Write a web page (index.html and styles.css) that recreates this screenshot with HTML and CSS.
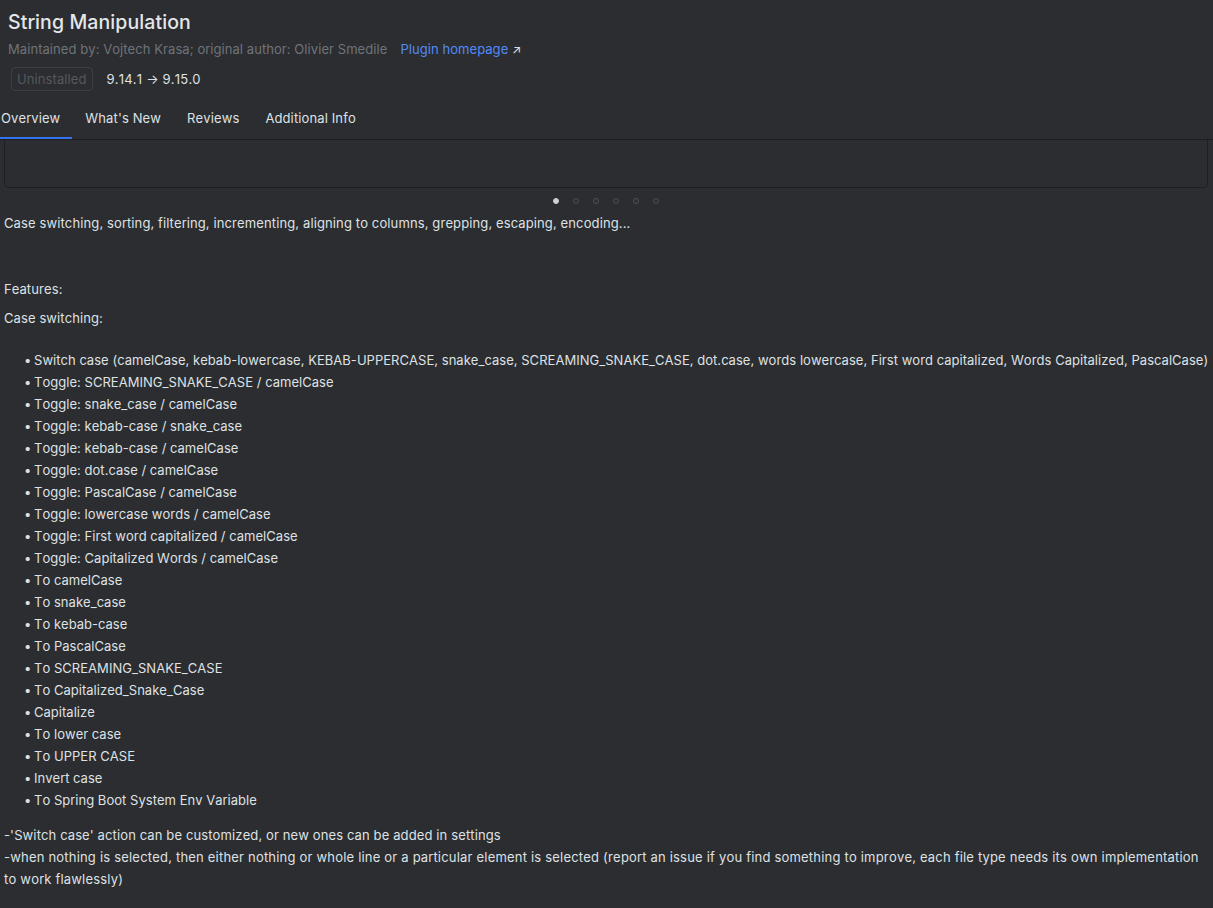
FILE: index.html
```html
<!DOCTYPE html>
<html>
<head>
<meta charset="utf-8">
<link rel="stylesheet" href="styles.css">
</head>
<body>
<div class="page">
  <header class="head">
    <h1 class="title">String Manipulation</h1>
    <div class="meta">
      <span class="authors">Maintained by: Vojtech Krasa; original author: Olivier Smedile</span>
      <a class="homepage">Plugin homepage <span class="arrow">↗</span></a>
    </div>
    <div class="status">
      <span class="badge">Uninstalled</span>
      <span class="version">9.14.1 → 9.15.0</span>
    </div>
  </header>
  <nav class="tabs">
    <span class="tab active">Overview</span>
    <span class="tab">What's New</span>
    <span class="tab">Reviews</span>
    <span class="tab">Additional Info</span>
  </nav>
  <main class="content">
    <div class="shot"></div>
    <div class="dots">
      <span class="dot on"></span><span class="dot"></span><span class="dot"></span><span class="dot"></span><span class="dot"></span><span class="dot"></span>
    </div>
    <p class="lead">Case switching, sorting, filtering, incrementing, aligning to columns, grepping, escaping, encoding...</p>
    <p class="features">Features:</p>
    <p class="sub">Case switching:</p>
    <ul class="list">
      <li>Switch case (camelCase, kebab-lowercase, KEBAB-UPPERCASE, snake_case, SCREAMING_SNAKE_CASE, dot.case, words lowercase, First word capitalized, Words Capitalized, PascalCase)</li>
      <li>Toggle: SCREAMING_SNAKE_CASE / camelCase</li>
      <li>Toggle: snake_case / camelCase</li>
      <li>Toggle: kebab-case / snake_case</li>
      <li>Toggle: kebab-case / camelCase</li>
      <li>Toggle: dot.case / camelCase</li>
      <li>Toggle: PascalCase / camelCase</li>
      <li>Toggle: lowercase words / camelCase</li>
      <li>Toggle: First word capitalized / camelCase</li>
      <li>Toggle: Capitalized Words / camelCase</li>
      <li>To camelCase</li>
      <li>To snake_case</li>
      <li>To kebab-case</li>
      <li>To PascalCase</li>
      <li>To SCREAMING_SNAKE_CASE</li>
      <li>To Capitalized_Snake_Case</li>
      <li>Capitalize</li>
      <li>To lower case</li>
      <li>To UPPER CASE</li>
      <li>Invert case</li>
      <li>To Spring Boot System Env Variable</li>
    </ul>
    <p class="note"><span class="note-a">-'Switch case' action can be customized, or new ones can be added in settings</span><br>-when nothing is selected, then either nothing or whole line or a particular element is selected (report an issue if you find something to improve, each file type needs its own implementation to work flawlessly)</p>
  </main>
</div>
</body>
</html>
```
FILE: styles.css
```css
html, body {
  margin: 0;
  padding: 0;
  background: #2b2d30;
  height: 100%;
  overflow: hidden;
}
body {
  font-family: Inter, "Noto Sans", sans-serif;
  font-size: 13px;
  font-kerning: none;
  color: #dfe1e5;
}
.page {
  display: flex;
  flex-direction: column;
}
.head {
  padding: 9px 8px 0 8px;
}
.title {
  margin: 0;
  font-size: 19.5px;
  font-weight: 500;
  letter-spacing: 0.1px;
  line-height: 26px;
  color: #e4e6ea;
}
.meta {
  margin-top: 3px;
  display: flex;
  gap: 13px;
  line-height: 22px;
}
.authors {
  color: #6f737a;
  letter-spacing: 0.07px;
}
.homepage {
  color: #548af7;
  letter-spacing: 0.07px;
}
.arrow {
  color: #dfe1e5;
  font-size: 12px;
}
.status {
  margin-top: 6px;
  display: flex;
  align-items: center;
  gap: 14px;
  padding-left: 3px;
}
.badge {
  border: 1px solid #3c3e43;
  border-radius: 4px;
  color: #55585e;
  padding: 0 5px;
  line-height: 22px;
  letter-spacing: 0.1px;
}
.version {
  color: #dfe1e5;
  letter-spacing: 0.2px;
}
.tabs {
  margin-top: 6px;
  display: flex;
  border-bottom: 1px solid #1e1f22;
  height: 42px;
}
.tab {
  padding: 0 13px;
  line-height: 42px;
  height: 42px;
  box-sizing: border-box;
  letter-spacing: 0.12px;
}
.tab.active {
  padding: 0 12px 0 1px;
  border-bottom: 2px solid #3574f0;
}
.content {
  padding: 0 5px 0 4px;
}
.shot {
  height: 47px;
  border: 1px solid #1e1f22;
  border-top: none;
  border-radius: 0 0 5px 5px;
}
.dots {
  display: flex;
  justify-content: center;
  gap: 14px;
  margin-top: 9px;
  height: 7px;
  align-items: center;
}
.dot {
  width: 6px;
  height: 6px;
  border-radius: 50%;
  border: 1px solid #4e5157;
  box-sizing: border-box;
}
.dot.on {
  background: #ced0d6;
  border-color: #ced0d6;
}
.lead {
  margin: 8px 0 0;
  line-height: 22px;
  letter-spacing: 0.12px;
}
.features {
  margin: 44px 0 0;
  line-height: 22px;
  letter-spacing: 0.1px;
}
.sub {
  margin: 7px 0 0;
  line-height: 22px;
  letter-spacing: 0.1px;
}
.list {
  margin: 20px 0 0;
  padding-left: 30px;
  list-style: none;
  letter-spacing: 0.035px;
}
.list li {
  line-height: 22px;
  position: relative;
  white-space: nowrap;
}
.list li::before {
  content: "•";
  position: absolute;
  left: -10px;
}
.note {
  margin: 13px 0 0;
  line-height: 22px;
  letter-spacing: 0.2px;
}
.note-a {
  letter-spacing: 0.125px;
}
```
